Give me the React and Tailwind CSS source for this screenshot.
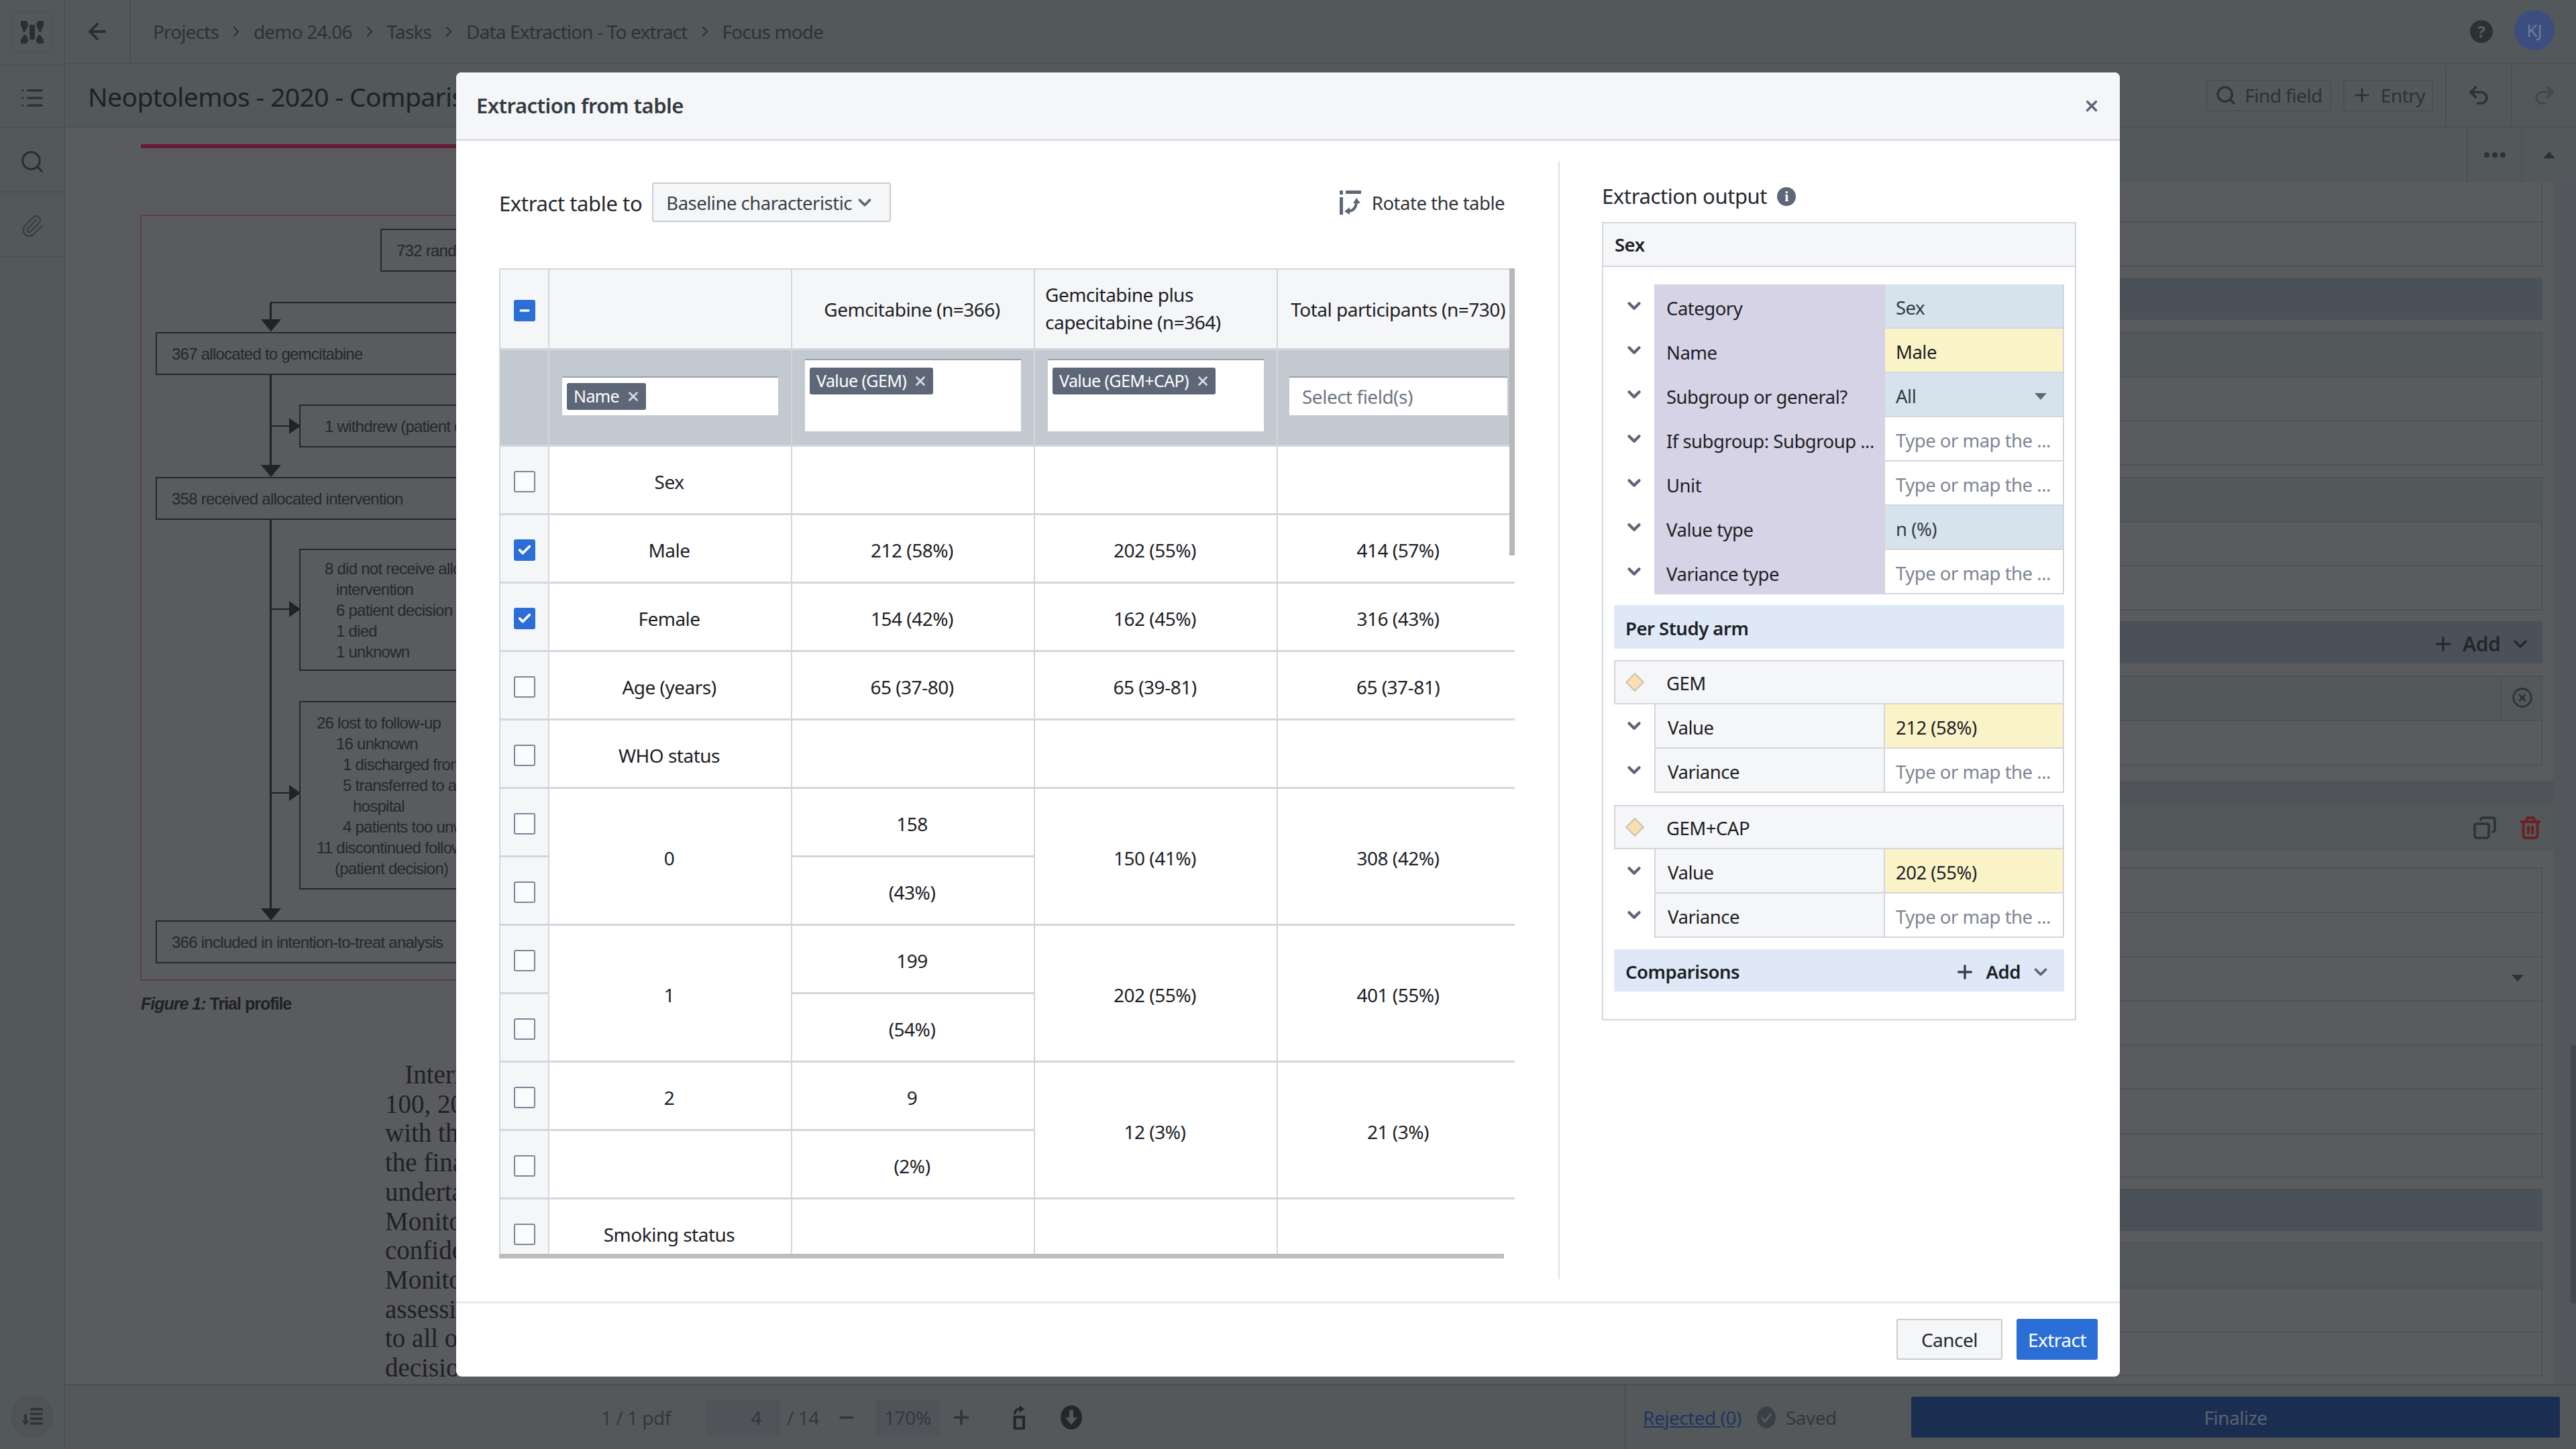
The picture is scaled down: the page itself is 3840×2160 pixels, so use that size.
import React from "react";
import { ChevronDown, ChevronRight, ArrowLeft, List, Search, Paperclip, Plus, X, Check, Minus, Undo2, Redo2, Copy, Trash2, CircleX } from "lucide-react";

const Chev = ({ cls = "text-[#5d6778]" }) => <ChevronDown size={30} strokeWidth={3.5} className={cls} />;

function Logo() {
  return (
    <svg width="36" height="36" viewBox="0 0 36 36" fill="#2a2f34">
      <rect x="14" y="7" width="8" height="22" />
      <path d="M1 1h8l3 4-1 5-3 6-1 2H5L3 12 1 8z" />
      <path d="M35 1h-8l-3 4 1 5 3 6 1 2h2l2-6 2-4z" />
      <path d="M1 35h8l3-4-1-5-2-4H6l-3 4-2 4z" />
      <path d="M35 35h-8l-3-4 1-5 2-4h3l3 4 2 4z" />
    </svg>
  );
}

function Breadcrumbs() {
  const items = ["Projects", "demo 24.06", "Tasks", "Data Extraction - To extract", "Focus mode"];
  return (
    <div className="flex items-center pl-[33px] text-[28px] text-[#2d3237] tracking-[-0.85px]">
      {items.map((t, i) => (
        <React.Fragment key={t}>
          {i > 0 && <ChevronRight size={26} strokeWidth={2} className="mx-[13px] text-[#2d3237]" />}
          <span>{t}</span>
        </React.Fragment>
      ))}
    </div>
  );
}

function Sidebar() {
  return (
    <aside className="w-[97px] shrink-0 h-full bg-[#53585b] border-r-2 border-[#4b5053] flex flex-col text-[#2a2f34]">
      <div className="h-[96px] flex items-center justify-center">
        <div className="w-[62px] h-[62px] border-2 border-[#4f5457] flex items-center justify-center"><Logo /></div>
      </div>
      <div className="h-[95px] flex items-center justify-center border-y-2 border-[#4b5053] pt-[4px]"><List size={38} strokeWidth={2} /></div>
      <div className="h-[96px] flex items-center justify-center border-b-2 border-[#4b5053] pt-[6px]"><Search size={38} strokeWidth={2} /></div>
      <div className="h-[97px] flex items-center justify-center border-b-2 border-[#4b5053] pt-[4px]"><Paperclip size={36} strokeWidth={1.6} className="text-[#3a3f44]" /></div>
      <div className="flex-1" />
      <div className="h-[96px] flex items-center justify-center">
        <div className="w-[64px] h-[64px] rounded-full bg-[#4f5356] flex items-center justify-center">
          <svg width="34" height="34" viewBox="0 0 24 24" fill="none" stroke="#2f3438" strokeWidth="2.6">
            <path d="M10 4h13M10 9h13M10 14h13M10 19h13" />
            <path d="M5 9v11" />
            <path d="M1 16l4 5 4-5z" fill="#2f3438" stroke="none" />
          </svg>
        </div>
      </div>
    </aside>
  );
}

function Flowchart() {
  const Box = ({ x, y, w = 500, h = 64, children }) => (
    <div className="absolute border-2 border-[#24272b] text-[#25282c] font-['Liberation_Sans',sans-serif] text-[24px] leading-[31px] tracking-[-0.75px] whitespace-nowrap flex flex-col justify-center" style={{ left: x, top: y, width: w, height: h }}>
      {children}
    </div>
  );
  const Ln = ({ pl, children }) => <div style={{ paddingLeft: pl }}>{children}</div>;
  const V = ({ x, y, h }) => <div className="absolute bg-[#1f2226] w-[3px]" style={{ left: x, top: y, height: h }} />;
  const H = ({ x, y, w }) => <div className="absolute bg-[#1f2226] h-[2px]" style={{ left: x, top: y, width: w }} />;
  const Down = ({ x, y }) => <div className="absolute w-0 h-0 border-x-[15px] border-x-transparent border-t-[18px] border-t-[#1f2226]" style={{ left: x, top: y }} />;
  const Right = ({ x, y }) => <div className="absolute w-0 h-0 border-y-[12px] border-y-transparent border-l-[17px] border-l-[#1f2226]" style={{ left: x, top: y }} />;
  return (
    <div className="absolute inset-0">
      <div className="absolute left-[210px] top-[215px] w-[500px] h-[6px] bg-[#661c33]" />
      <div className="absolute left-[209px] top-[320px] w-[700px] h-[1142px] border-2 border-[#5f3c4b]" />
      <Box x={567} y={341} w={330}><Ln pl={22}>732 randomly assigned</Ln></Box>
      <H x={403} y={450} w={300} />
      <Down x={389} y={476} />
      <V x={402} y={451} h={30} />
      <Box x={232} y={495} w={620}><Ln pl={22}>367 allocated to gemcitabine</Ln></Box>
      <V x={402} y={559} h={140} />
      <Box x={446} y={603} w={420}><Ln pl={36}>1 withdrew (patient decision)</Ln></Box>
      <H x={403} y={634} w={30} /><Right x={431} y={623} />
      <Down x={389} y={693} />
      <Box x={232} y={711} w={620}><Ln pl={22}>358 received allocated intervention</Ln></Box>
      <V x={402} y={775} h={584} />
      <Box x={446} y={818} w={420} h={182}>
        <Ln pl={36}>8 did not receive allocated</Ln>
        <Ln pl={53}>intervention</Ln>
        <Ln pl={53}>6 patient decision</Ln>
        <Ln pl={53}>1 died</Ln>
        <Ln pl={53}>1 unknown</Ln>
      </Box>
      <H x={403} y={907} w={30} /><Right x={431} y={896} />
      <Box x={446} y={1045} w={420} h={281}>
        <Ln pl={24}>26 lost to follow-up</Ln>
        <Ln pl={53}>16 unknown</Ln>
        <Ln pl={63}>1 discharged from</Ln>
        <Ln pl={63}>5 transferred to a</Ln>
        <Ln pl={78}>hospital</Ln>
        <Ln pl={63}>4 patients too unwell</Ln>
        <Ln pl={24}>11 discontinued follow</Ln>
        <Ln pl={51}>(patient decision)</Ln>
      </Box>
      <H x={403} y={1181} w={30} /><Right x={431} y={1170} />
      <Down x={389} y={1354} />
      <Box x={232} y={1372} w={620}><Ln pl={22}>366 included in intention-to-treat analysis</Ln></Box>
      <div className="absolute left-[210px] top-[1478px] font-['Liberation_Sans',sans-serif] text-[25px] text-[#1e2125] font-bold tracking-[-1px]"><span className="italic">Figure 1:</span> Trial profile</div>
      <div className="absolute left-[574px] top-[1580px] font-['Liberation_Serif',serif] text-[#1e2125] text-[39px] leading-[43.7px] whitespace-pre">
        {"   Interim\n100, 200\nwith the\nthe final\nundertake\nMonitoring\nconfidence\nMonitoring\nassessing\nto all of\ndecision"}
      </div>
    </div>
  );
}

function FormPanel() {
  const Line = ({ y }) => <div className="absolute left-0 right-[49px] border-b-2 border-[#4e5256]" style={{ top: y }} />;
  const Band = ({ y, h }) => <div className="absolute left-0 right-[50px] bg-[#4b5158]" style={{ top: y, height: h }} />;
  const ys = [330, 396, 495, 561, 626, 692, 711, 777, 842, 908, 1007, 1073, 1139, 1293, 1359, 1425, 1491, 1557, 1622, 1689, 1754, 1852, 1919, 1985, 2050];
  return (
    <div className="absolute left-[2424px] top-0 w-[1416px] h-[2063px] pointer-events-none">
      <div className="absolute left-0 top-[272px] bottom-0 right-[34px] bg-[#5a5b5f]" />
      <div className="absolute right-0 top-[272px] bottom-0 w-[34px] bg-[#53575b]" />
      <div className="absolute right-0 top-[1558px] w-[8px] h-[385px] bg-[#46494c]" />
      <div className="absolute left-0 right-[34px] top-[1164px] h-[35px] bg-[#505458]" />
      <div className="absolute left-0 right-[34px] top-[1199px] h-[68px] bg-[#53585b] border-b-2 border-[#4e5256]" />
      <div className="absolute left-0 right-[50px] top-[495px] h-[66px] bg-[#53585b]" />
      <div className="absolute left-0 right-[50px] top-[711px] h-[66px] bg-[#53585b]" />
      <div className="absolute left-0 right-[50px] top-[1007px] h-[66px] bg-[#53585b]" />
      <div className="absolute left-0 right-[50px] top-[1852px] h-[67px] bg-[#53585b]" />
      <Band y={414} h={63} /><Band y={926} h={63} /><Band y={1772} h={63} />
      {ys.map((y) => <Line key={y} y={y} />)}
      <div className="absolute left-[1364px] top-[272px] h-[126px] border-l-2 border-[#4e5256]" />
      <div className="absolute left-[1364px] top-[495px] h-[199px] border-l-2 border-[#4e5256]" />
      <div className="absolute left-[1364px] top-[711px] h-[199px] border-l-2 border-[#4e5256]" />
      <div className="absolute left-[1364px] top-[1007px] h-[134px] border-l-2 border-[#4e5256]" />
      <div className="absolute left-[1364px] top-[1293px] h-[463px] border-l-2 border-[#4e5256]" />
      <div className="absolute left-[1364px] top-[1852px] h-[200px] border-l-2 border-[#4e5256]" />
      <div className="absolute left-[1201px] top-[937px] flex items-center text-[30px] text-[#23272b]">
        <Plus size={34} strokeWidth={2} className="mr-[12px]" />
        <span className="font-semibold tracking-[-0.5px]">Add</span>
        <ChevronDown size={32} strokeWidth={2.5} className="ml-[14px]" />
      </div>
      <div className="absolute left-[1303px] top-[1007px] w-[64px] h-[66px] border-l-2 border-[#4e5256] flex items-center justify-center"><CircleX size={32} strokeWidth={2} className="text-[#2d3135]" /></div>
      <Copy size={36} strokeWidth={2.4} className="absolute left-[1262px] top-[1216px] text-[#2e3338] -scale-x-100" />
      <Trash2 size={36} strokeWidth={2.6} className="absolute left-[1330px] top-[1216px] text-[#6a2024]" />
      <div className="absolute left-[1320px] top-[1453px] w-0 h-0 border-x-[9px] border-x-transparent border-t-[10px] border-t-[#2d3135]" />
    </div>
  );
}

function TopBars() {
  return (
    <>
      <div className="h-[96px] bg-[#53585a] border-b-2 border-[#4c5053] flex items-center">
        <div className="w-[98px] h-full border-r-2 border-[#4c5053] flex items-center justify-center text-[#2a2f34]"><ArrowLeft size={38} strokeWidth={2.4} /></div>
        <Breadcrumbs />
        <div className="flex-1" />
        <div className="w-[34px] h-[34px] rounded-full bg-[#2c3136] text-[#585d61] flex items-center justify-center text-[24px] font-bold mr-[32px]">?</div>
        <div className="w-[60px] h-[60px] rounded-full bg-[#3c4e7f] text-[#6e7d9b] flex items-center justify-center text-[26px] mr-[32px] mb-[4px]">KJ</div>
      </div>
      <div className="h-[94px] bg-[#53585a] border-b-2 border-[#4c5053] flex items-center relative">
        <span className="pl-[34px] pt-[4px] text-[39px] text-[#1d2226] tracking-[-0.6px] whitespace-nowrap">Neoptolemos - 2020 - Comparison</span>
        <div className="flex-1" />
        <div className="h-[47px] w-[186px] border-2 border-[#4c5053] rounded-[3px] flex items-center justify-center text-[28px] text-[#2d3237] tracking-[-0.5px] mr-[18px]">
          <Search size={32} strokeWidth={2.4} className="mr-[12px]" />Find field
        </div>
        <div className="h-[47px] w-[134px] border-2 border-[#4c5053] rounded-[3px] flex items-center justify-center text-[28px] text-[#2d3237] tracking-[-0.5px] mr-[18px]">
          <Plus size={32} strokeWidth={2} className="mr-[12px]" />Entry
        </div>
        <div className="w-[98px] h-full border-l-2 border-[#4c5053] flex items-center justify-center text-[#2d3237]"><Undo2 size={36} strokeWidth={2.4} /></div>
        <div className="w-[97px] h-full border-l-2 border-[#4c5053] flex items-center justify-center text-[#43484c]"><Redo2 size={36} strokeWidth={2.4} /></div>
      </div>
      <div className="h-[82px] flex">
        <div className="flex-1" />
        <div className="w-[2327px]" />
        <div className="flex-1 bg-[#53585a] flex justify-end">
          <div className="w-[81px] border-l-2 border-[#4c5053] flex items-center justify-center gap-[4px]">
            <i className="w-[8px] h-[8px] rounded-full bg-[#2d3237]" /><i className="w-[8px] h-[8px] rounded-full bg-[#2d3237]" /><i className="w-[8px] h-[8px] rounded-full bg-[#2d3237]" />
          </div>
          <div className="w-[82px] border-l-2 border-[#4c5053] flex items-center justify-center">
            <div className="w-0 h-0 border-x-[9px] border-x-transparent border-b-[10px] border-b-[#2d3237]" />
          </div>
        </div>
      </div>
    </>
  );
}

function BottomBar() {
  return (
    <div className="h-[97px] bg-[#54585b] border-t-2 border-[#4a4e51] flex items-center text-[28px] text-[#33383c] tracking-[-0.5px]">
      <div className="ml-[799px] w-[157px] whitespace-nowrap">1 / 1 pdf</div>
      <div className="w-[110px] h-[54px] bg-[#505458] flex items-center justify-end pr-[28px]">4</div>
      <div className="w-[72px] pl-[10px] whitespace-nowrap">/ 14</div>
      <div className="w-[54px] flex justify-center"><Minus size={30} strokeWidth={3} /></div>
      <div className="ml-[16px] w-[96px] h-[54px] bg-[#505458] flex items-center justify-center">170%</div>
      <div className="w-[64px] flex justify-center"><Plus size={32} strokeWidth={3} /></div>
      <div className="w-[106px] flex justify-center">
        <svg width="32" height="36" viewBox="0 0 24 27" fill="none" stroke="#23272b" strokeWidth="3">
          <rect x="8" y="13" width="10" height="13" />
          <path d="M8 10C8 6 10 4 14 4" strokeWidth="2.6" />
          <path d="M13 0l6 4-6 4z" fill="#23272b" stroke="none" />
        </svg>
      </div>
      <div className="w-[52px] flex justify-center">
        <svg width="34" height="36" viewBox="0 0 34 36">
          <ellipse cx="17" cy="18" rx="16" ry="18" fill="#23272b" />
          <path d="M14 7h6v11h6L17 29 8 18h6z" fill="#54585b" />
        </svg>
      </div>
      <div className="w-[801px] h-[95px] border-r-2 border-[#4a4e51]" />
      <div className="w-[172px] pl-[25px] underline text-[#21355f] whitespace-nowrap">Rejected (0)</div>
      <div className="w-[52px] ml-[11px] flex justify-center">
        <svg width="30" height="34" viewBox="0 0 30 34">
          <ellipse cx="15" cy="17" rx="14" ry="16" fill="#3a3f43" />
          <path d="M8 17l5 6 9-11" fill="none" stroke="#585c60" strokeWidth="3" />
        </svg>
      </div>
      <div className="w-[190px] pl-[3px] whitespace-nowrap">Saved</div>
      <div className="w-[967px] h-[61px] rounded-[3px] bg-[#1a2e52] flex items-center justify-center text-[#5a6270]">Finalize</div>
    </div>
  );
}

function Tag({ children }) {
  return (
    <span className="inline-flex items-center h-[40px] rounded-[3px] bg-[#5d6778] text-white text-[25px] pl-[10px] pr-[8px] tracking-[-0.6px] whitespace-nowrap">
      {children}
      <X size={22} strokeWidth={3} className="ml-[10px] text-[#d7dbe1]" />
    </span>
  );
}

function Box({ state }) {
  if (state === "on") return <div className="w-[32px] h-[32px] rounded-[3px] bg-[#2b6ed6] flex items-center justify-center mx-auto"><Check size={22} strokeWidth={4} className="text-white" /></div>;
  if (state === "mixed") return <div className="w-[32px] h-[32px] rounded-[3px] bg-[#2b6ed6] flex items-center justify-center mx-auto"><Minus size={20} strokeWidth={4} className="text-white" /></div>;
  return <div className="w-[32px] h-[32px] rounded-[3px] bg-[#fafbfc] border-2 border-[#7a859a] mx-auto" />;
}

const B = "border-r-2 border-b-[3px] border-[#d3d6dc]";
const TD = ({ children, rs }) => <td rowSpan={rs} className={`${B} text-center align-middle p-0 pt-[6px] pr-[3px]`}>{children}</td>;
const HD = ({ children }) => <td className={`${B} text-center align-middle p-0 pt-[2px] pr-[3px]`}>{children}</td>;
const GR = ({ children, cls = "" }) => <td className={`${B} align-middle p-0 ${cls}`}>{children}</td>;
const CB = ({ state }) => <td className={`${B} bg-[#f5f6f8] p-0 pt-[5px] align-middle`}><Box state={state} /></td>;

function ExtractTable() {
  return (
    <div className="relative h-[1476px] w-[1514px] overflow-hidden">
      <table className="table-fixed border-collapse w-[1522px] text-[28px] text-[#1d2125] tracking-[-0.5px] border-l-2 border-t-2 border-[#d3d6dc]">
        <colgroup>
          <col className="w-[73px]" /><col className="w-[362px]" /><col className="w-[362px]" /><col className="w-[362px]" /><col className="w-[363px]" />
        </colgroup>
        <tbody>
          <tr className="h-[119px] bg-[#f5f6f8]">
            <CB state="mixed" />
            <HD />
            <HD>Gemcitabine (n=366)</HD>
            <td className={`${B} text-left pl-[15px] leading-[41px] p-0`}>Gemcitabine plus<br />capecitabine (n=364)</td>
            <HD>Total participants (n=730)</HD>
          </tr>
          <tr className="h-[144px] bg-[#c3c9d0]">
            <GR />
            <GR cls="pb-[4px]">
              <div className="mx-[19px] h-[58px] bg-white border-t-2 border-[#9aa0a8] flex items-center pl-[7px]"><Tag>Name</Tag></div>
            </GR>
            <GR cls="pb-[6px]">
              <div className="mx-[19px] h-[108px] bg-white border-t-2 border-[#9aa0a8] pl-[7px] pt-[8px] text-left"><Tag>Value (GEM)</Tag></div>
            </GR>
            <GR cls="pb-[6px]">
              <div className="mx-[19px] h-[108px] bg-white border-t-2 border-[#9aa0a8] pl-[7px] pt-[8px] text-left"><Tag>Value (GEM+CAP)</Tag></div>
            </GR>
            <GR cls="pb-[4px]">
              <div className="ml-[17px] mr-[19px] h-[58px] bg-white border-t-2 border-[#9aa0a8] flex items-center pl-[19px] text-[#6f7683]">Select field(s)</div>
            </GR>
          </tr>
          <tr className="h-[102px]"><CB /><TD>Sex</TD><TD /><TD /><TD /></tr>
          <tr className="h-[102px]"><CB state="on" /><TD>Male</TD><TD>212 (58%)</TD><TD>202 (55%)</TD><TD>414 (57%)</TD></tr>
          <tr className="h-[102px]"><CB state="on" /><TD>Female</TD><TD>154 (42%)</TD><TD>162 (45%)</TD><TD>316 (43%)</TD></tr>
          <tr className="h-[102px]"><CB /><TD>Age (years)</TD><TD>65 (37-80)</TD><TD>65 (39-81)</TD><TD>65 (37-81)</TD></tr>
          <tr className="h-[102px]"><CB /><TD>WHO status</TD><TD /><TD /><TD /></tr>
          <tr className="h-[102px]"><CB /><TD rs={2}>0</TD><TD>158</TD><TD rs={2}>150 (41%)</TD><TD rs={2}>308 (42%)</TD></tr>
          <tr className="h-[102px]"><CB /><TD>(43%)</TD></tr>
          <tr className="h-[102px]"><CB /><TD rs={2}>1</TD><TD>199</TD><TD rs={2}>202 (55%)</TD><TD rs={2}>401 (55%)</TD></tr>
          <tr className="h-[102px]"><CB /><TD>(54%)</TD></tr>
          <tr className="h-[102px]"><CB /><TD>2</TD><TD>9</TD><TD rs={2}>12 (3%)</TD><TD rs={2}>21 (3%)</TD></tr>
          <tr className="h-[102px]"><CB /><TD /><TD>(2%)</TD></tr>
          <tr className="h-[102px]"><CB /><TD>Smoking status</TD><TD /><TD /><TD /></tr>
        </tbody>
      </table>
      <div className="absolute right-0 top-0 w-[8px] h-[428px] bg-[#b5b7bb]" />
      <div className="absolute left-0 bottom-0 w-[1498px] h-[7px] bg-[#bdbdbd]" />
    </div>
  );
}

function OutRow({ label, value, kind = "empty", labelBg = "bg-[#d6d3e6]", select }) {
  const valueCls = {
    filled: "bg-[#d6e2ec] text-[#343b45]",
    yellow: "bg-[#fbf3c8] text-[#1d2125]",
    empty: "bg-white text-[#7d8594]",
  }[kind];
  const sep = labelBg === "bg-[#d6d3e6]" ? "" : "border-b-2 border-l-2 border-[#d3d6dc]";
  return (
    <div className="flex h-[66px]">
      <div className="w-[60px] flex items-center justify-center pb-[2px]"><Chev /></div>
      <div className={`w-[342px] ${labelBg} ${sep} flex items-center pl-[18px] pt-[5px] whitespace-nowrap`}>{label}</div>
      <div className={`w-[269px] ${valueCls} border-b-2 border-r-2 border-l-2 border-[#d3d6dc] flex items-center justify-between pl-[16px] pr-[24px] pt-[5px] whitespace-nowrap`}>
        <span>{value}</span>
        {select && <span className="w-0 h-0 border-x-[9px] border-x-transparent border-t-[10px] border-t-[#5d6778]" />}
      </div>
    </div>
  );
}

function Arm({ name, value }) {
  const g = "bg-[#f5f6f8]";
  return (
    <div>
      <div className="h-[66px] bg-[#f5f6f8] border-2 border-[#d3d6dc] flex items-center">
        <div className="w-[58px] flex items-center justify-center"><span className="w-[20px] h-[20px] rotate-45 bg-[#fbdfb0] border-2 border-[#c9c4b8]" /></div>
        <span className="pl-[18px] pt-[4px]">{name}</span>
      </div>
      <OutRow label="Value" value={value} kind="yellow" labelBg={g} />
      <OutRow label="Variance" value="Type or map the ..." labelBg={g} />
    </div>
  );
}

function OutputPanel() {
  const P = "Type or map the ...";
  return (
    <div className="w-[707px]">
      <div className="h-[91px] flex items-center pt-[14px] text-[31px] text-[#24282d] tracking-[-0.4px]">
        Extraction output
        <span className="ml-[15px] w-[28px] h-[28px] rounded-full bg-[#5d6778] text-white flex items-center justify-center text-[22px] font-bold font-['Liberation_Serif',serif]">i</span>
      </div>
      <div className="h-[1190px] border-2 border-[#d3d6dc] text-[27.5px] tracking-[-0.5px] text-[#1d2125]">
        <div className="h-[65px] bg-[#f5f6f8] border-b-2 border-[#d3d6dc] flex items-center pl-[17px] font-semibold">Sex</div>
        <div className="pt-[26px] px-[16px]">
          <OutRow label="Category" value="Sex" kind="filled" />
          <OutRow label="Name" value="Male" kind="yellow" />
          <OutRow label="Subgroup or general?" value="All" kind="filled" select />
          <OutRow label="If subgroup: Subgroup ..." value={P} />
          <OutRow label="Unit" value={P} />
          <OutRow label="Value type" value="n (%)" kind="filled" />
          <OutRow label="Variance type" value={P} />
          <div className="mt-[16px] h-[65px] bg-[#dfe8f7] flex items-center pl-[17px] pt-[4px] font-semibold">Per Study arm</div>
          <div className="mt-[17px]"><Arm name="GEM" value="212 (58%)" /></div>
          <div className="mt-[18px]"><Arm name="GEM+CAP" value="202 (55%)" /></div>
          <div className="mt-[17px] h-[63px] bg-[#dfe8f7] flex items-center pl-[17px] pt-[4px] font-semibold">
            Comparisons
            <div className="flex-1" />
            <Plus size={32} strokeWidth={2.6} className="text-[#3a4250] mr-[16px]" />
            <span>Add</span>
            <ChevronDown size={30} strokeWidth={3} className="text-[#5d6778] ml-[15px] mr-[20px]" />
          </div>
        </div>
      </div>
    </div>
  );
}

function RotateIcon() {
  return (
    <svg width="34" height="36" viewBox="0 0 32 36" fill="#5d6778">
      <rect x="0" y="0" width="5" height="6" />
      <rect x="0" y="10" width="5" height="26" />
      <rect x="9" y="0" width="23" height="5" />
      <path d="M11 31c8 0 13-4 14-13" fill="none" stroke="#5d6778" strokeWidth="4" />
      <path d="M20 19l5-8 6 8z" />
      <path d="M15 25l-8 6 8 5z" />
    </svg>
  );
}

function Modal() {
  return (
    <div className="absolute left-[680px] top-[108px] w-[2480px] h-[1944px] bg-white rounded-[8px] flex flex-col overflow-hidden font-['Noto_Sans',sans-serif]">
      <div className="h-[102px] shrink-0 bg-[#f5f6f8] border-b-[3px] border-[#dfe1e5] flex items-center justify-between pl-[30px] pr-[29px]">
        <span className="text-[31px] font-semibold text-[#343a42] tracking-[-0.55px]">Extraction from table</span>
        <X size={26} strokeWidth={3.2} className="text-[#5d6778]" />
      </div>
      <div className="flex-1 flex pl-[64px] pt-[30px] pb-[33px] min-h-0">
        <div className="w-[1514px] mr-[65px] pt-[32px]">
          <div className="h-[59px] flex items-center justify-between">
            <div className="flex items-center">
              <span className="text-[31px] text-[#24282d] tracking-[-0.4px] pt-[3px]">Extract table to</span>
              <div className="ml-[15px] w-[356px] h-[59px] bg-[#f5f6f8] border-2 border-[#c9ccd1] rounded-[3px] flex items-center justify-between pl-[19px] pr-[22px] text-[27.5px] text-[#3a4049] tracking-[-0.5px]">
                <span className="pt-[3px]">Baseline characteristic</span>
                <ChevronDown size={30} strokeWidth={3} className="text-[#5d6778]" />
              </div>
            </div>
            <div className="flex items-center text-[27.5px] text-[#2f343b] tracking-[-0.5px] pr-[15px]">
              <RotateIcon />
              <span className="ml-[15px] pt-[3px]">Rotate the table</span>
            </div>
          </div>
          <div className="mt-[69px]"><ExtractTable /></div>
        </div>
        <div className="border-l-2 border-[#dfe1e5] pl-[63px]"><OutputPanel /></div>
      </div>
      <div className="h-[112px] shrink-0 border-t-[3px] border-[#e8eaed] flex items-center justify-end pr-[33px] pb-[2px] text-[28px] tracking-[-0.5px]">
        <div className="w-[158px] h-[61px] bg-[#f5f6f8] border-2 border-[#c9ccd1] rounded-[3px] flex items-center justify-center text-[#24282d]">Cancel</div>
        <div className="ml-[21px] w-[121px] h-[61px] bg-[#2b6ed6] rounded-[3px] flex items-center justify-center text-white">Extract</div>
      </div>
    </div>
  );
}

export default function App() {
  return (
    <div className="relative w-[3840px] h-[2160px] overflow-hidden bg-[#5a5b5f] font-['Noto_Sans',sans-serif] flex">
      <Sidebar />
      <main className="flex-1 flex flex-col min-w-0">
        <TopBars />
        <div className="flex-1" />
        <BottomBar />
      </main>
      <div className="absolute left-0 top-0 w-full h-[2063px] overflow-hidden pointer-events-none"><Flowchart /></div>
      <FormPanel />
      <Modal />
    </div>
  );
}
